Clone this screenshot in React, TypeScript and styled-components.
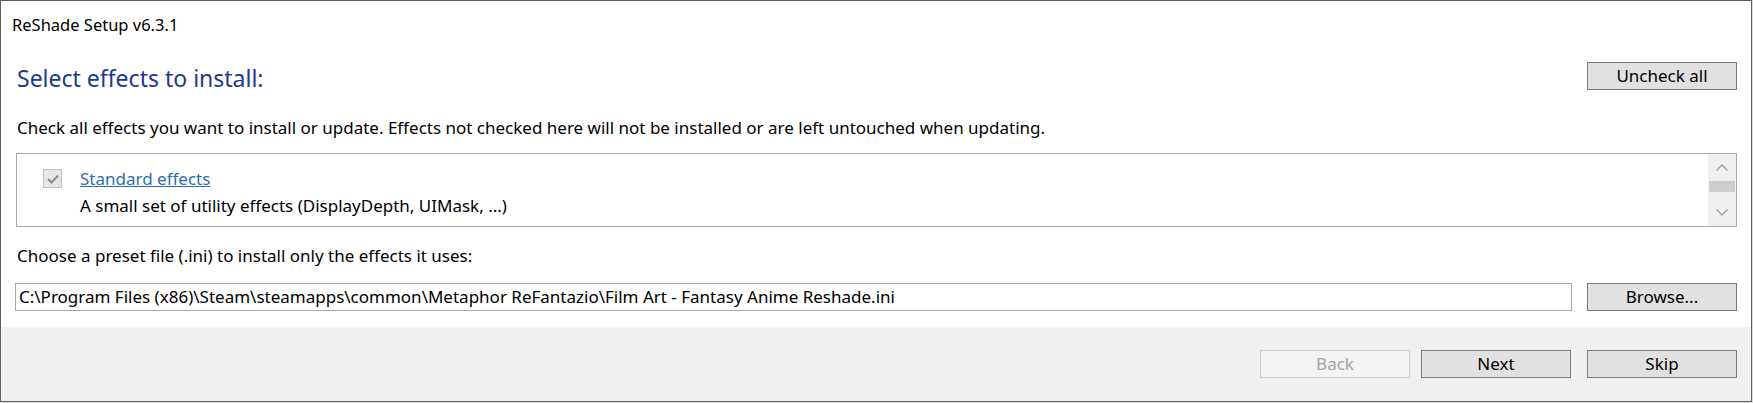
import React from "react";
import styled, { createGlobalStyle } from "styled-components";

const GlobalStyle = createGlobalStyle`
  html, body {
    margin: 0;
    padding: 0;
    background: #dcdcdc;
  }
  body {
    font-family: "Noto Sans", "Open Sans", sans-serif;
  }
`;

const Window = styled.div`
  width: 1752px;
  height: 402px;
  box-sizing: border-box;
  border: 1px solid #5f5f5f;
  background: #ffffff;
  display: flex;
  flex-direction: column;
  font-size: 17px;
  color: #000;
`;

const TitleBar = styled.div`
  height: 47px;
  display: flex;
  align-items: center;
  padding-left: 11px;
  font-size: 16.5px;
  color: #000;
`;

const Content = styled.div`
  display: flex;
  flex-direction: column;
  padding: 0 14px;
`;

const HeaderRow = styled.div`
  margin-top: 14px;
  display: flex;
  justify-content: space-between;
  align-items: flex-start;
`;

const Heading = styled.div`
  font-size: 23px;
  line-height: 32px;
  color: #1e3a8e;
  padding-left: 2px;
`;

const Button = styled.button<{ $disabled?: boolean }>`
  width: 150px;
  height: 28px;
  box-sizing: border-box;
  border: 1px solid ${(p) => (p.$disabled ? "#cccccc" : "#7a7a7a")};
  background: ${(p) => (p.$disabled ? "#f4f4f4" : "#e1e1e1")};
  color: ${(p) => (p.$disabled ? "#a3a3a3" : "#000")};
  font-family: inherit;
  font-size: 17px;
  padding: 0;
  line-height: 26px;
`;

const Description = styled.div`
  margin-top: 22px;
  line-height: 24px;
  padding-left: 2px;
`;

const ListBox = styled.div`
  margin-top: 13px;
  margin-left: 1px;
  height: 74px;
  box-sizing: border-box;
  border: 1px solid #a8a8a8;
  display: flex;
`;

const ListItems = styled.div`
  flex: 1;
  padding: 15px 0 0 26px;
`;

const Item = styled.div`
  display: flex;
  align-items: flex-start;
`;

const CheckBox = styled.div`
  width: 19px;
  height: 19px;
  box-sizing: border-box;
  border: 1px solid #c2c2c2;
  background: #e6e6e6;
  display: flex;
  align-items: center;
  justify-content: center;
`;

const ItemText = styled.div`
  margin-left: 18px;
  display: flex;
  flex-direction: column;
`;

const ItemLink = styled.a`
  color: #2a6db5;
  text-decoration: underline;
  line-height: 24px;
  margin-top: -2px;
`;

const ItemDesc = styled.div`
  line-height: 24px;
  margin-top: 3px;
`;

const ScrollBar = styled.div`
  width: 28px;
  background: #f0f0f0;
  display: flex;
  flex-direction: column;
`;

const ScrollArrow = styled.div`
  height: 27px;
  display: flex;
  align-items: center;
  justify-content: center;
`;

const ScrollTrack = styled.div`
  flex: 1;
  padding: 0 1px;
  display: flex;
  flex-direction: column;
`;

const ScrollThumb = styled.div`
  height: 11px;
  background: #cdcdcd;
`;

const Label = styled.div`
  margin-top: 17px;
  line-height: 24px;
  padding-left: 2px;
`;

const PathRow = styled.div`
  margin-top: 15px;
  display: flex;
  gap: 15px;
`;

const PathInput = styled.div`
  flex: 1;
  height: 28px;
  box-sizing: border-box;
  border: 1px solid #a8a8a8;
  padding-left: 3px;
  line-height: 26px;
  white-space: nowrap;
  overflow: hidden;
`;

const Footer = styled.div`
  margin-top: 16px;
  flex: 1;
  background: #f0f0f0;
  display: flex;
  justify-content: flex-end;
  align-items: flex-start;
  padding: 23px 14px 0 0;
  gap: 11px;
`;

const SkipButton = styled(Button)`
  margin-left: 5px;
`;

const Chevron = ({ up }: { up?: boolean }) => (
  <svg width="14" height="9" viewBox="0 0 14 9">
    <path
      d={up ? "M1.5 7.5 L7 2 L12.5 7.5" : "M1.5 1.5 L7 7 L12.5 1.5"}
      fill="none"
      stroke="#a3a3a3"
      strokeWidth="1.5"
    />
  </svg>
);

const App = () => {
  return (
    <>
      <GlobalStyle />
      <Window>
        <TitleBar>ReShade Setup v6.3.1</TitleBar>
        <Content>
          <HeaderRow>
            <Heading>Select effects to install:</Heading>
            <Button>Uncheck all</Button>
          </HeaderRow>
          <Description>
            Check all effects you want to install or update. Effects not checked here will not be
            installed or are left untouched when updating.
          </Description>
          <ListBox>
            <ListItems>
              <Item>
                <CheckBox>
                  <svg width="12" height="10" viewBox="0 0 12 10">
                    <path d="M1 5 L4.5 8.5 L11 1.5" fill="none" stroke="#878787" strokeWidth="2" />
                  </svg>
                </CheckBox>
                <ItemText>
                  <ItemLink>Standard effects</ItemLink>
                  <ItemDesc>A small set of utility effects (DisplayDepth, UIMask, ...)</ItemDesc>
                </ItemText>
              </Item>
            </ListItems>
            <ScrollBar>
              <ScrollArrow>
                <Chevron up />
              </ScrollArrow>
              <ScrollTrack>
                <ScrollThumb />
              </ScrollTrack>
              <ScrollArrow>
                <Chevron />
              </ScrollArrow>
            </ScrollBar>
          </ListBox>
          <Label>Choose a preset file (.ini) to install only the effects it uses:</Label>
          <PathRow>
            <PathInput>
              C:\Program Files (x86)\Steam\steamapps\common\Metaphor ReFantazio\Film Art - Fantasy
              Anime Reshade.ini
            </PathInput>
            <Button>Browse...</Button>
          </PathRow>
        </Content>
        <Footer>
          <Button $disabled>Back</Button>
          <Button>Next</Button>
          <SkipButton>Skip</SkipButton>
        </Footer>
      </Window>
    </>
  );
};

export default App;
